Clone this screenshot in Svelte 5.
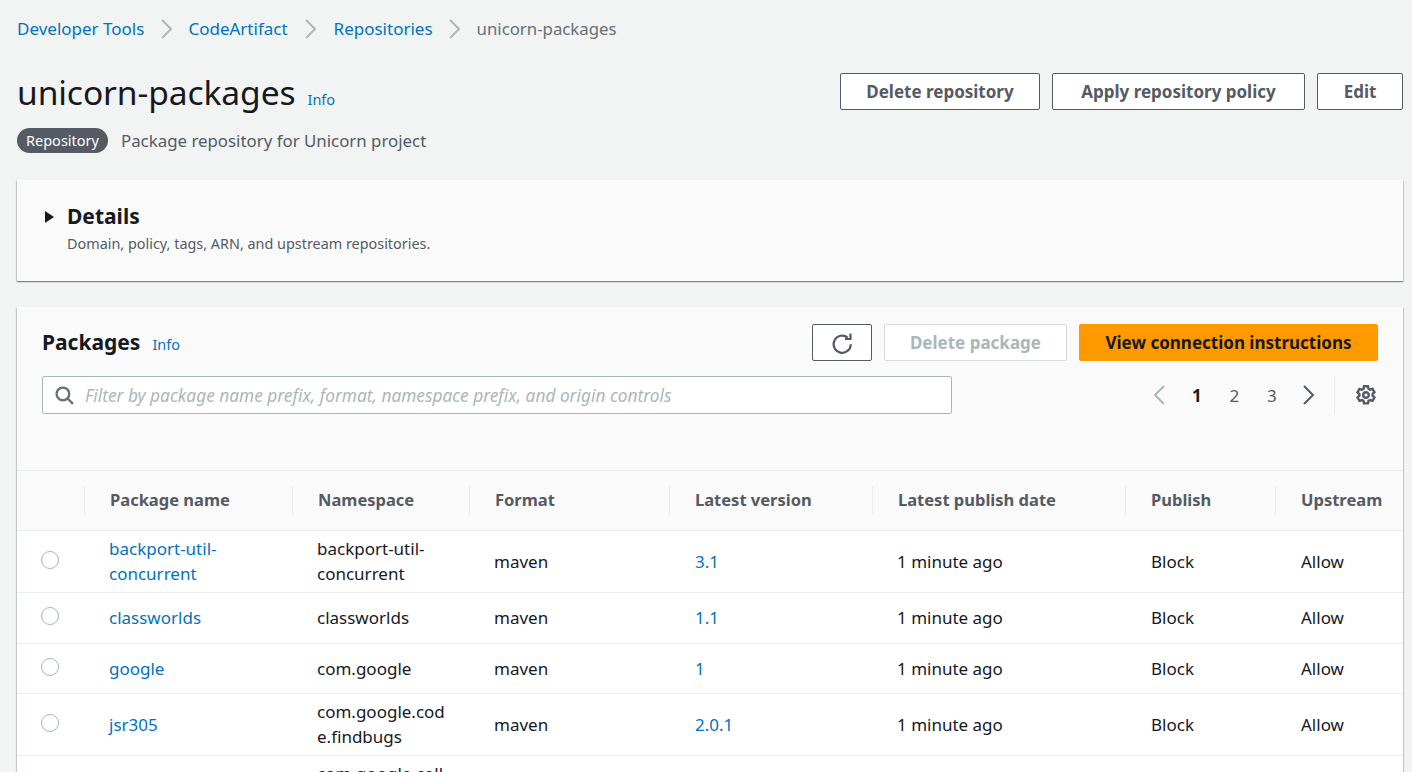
<script>
  const rows = [
    { name: 'backport-util-concurrent', ns: 'backport-util-concurrent', ver: '3.1' },
    { name: 'classworlds', ns: 'classworlds', ver: '1.1' },
    { name: 'google', ns: 'com.google', ver: '1' },
    { name: 'jsr305', ns: 'com.google.code.findbugs', ver: '2.0.1' },
    { name: 'google-collect', ns: 'com.google.collections', ver: '1.0' }
  ];
  const cols = ['Package name', 'Namespace', 'Format', 'Latest version', 'Latest publish date', 'Publish', 'Upstream'];
</script>

<div class="page">
  <nav class="crumbs">
    <a href="#a">Developer Tools</a>
    <svg class="sep" viewBox="0 0 11 20"><path d="M1 1l9 9-9 9" /></svg>
    <a href="#b">CodeArtifact</a>
    <svg class="sep mid" viewBox="0 0 11 20"><path d="M1 1l9 9-9 9" /></svg>
    <a href="#c">Repositories</a>
    <svg class="sep" viewBox="0 0 11 20"><path d="M1 1l9 9-9 9" /></svg>
    <span class="cur">unicorn-packages</span>
  </nav>

  <header class="head">
    <div class="title">
      <h1>unicorn-packages</h1>
      <a class="info" href="#i">Info</a>
    </div>
    <div class="actions">
      <button class="btn">Delete repository</button>
      <button class="btn wide">Apply repository policy</button>
      <button class="btn edit">Edit</button>
    </div>
  </header>

  <div class="sub">
    <span class="badge">Repository</span>
    <span class="desc">Package repository for Unicorn project</span>
  </div>

  <section class="card details">
    <svg class="caret" viewBox="0 0 11 14"><path d="M1 1l9 6-9 6z" /></svg>
    <div>
      <h2>Details</h2>
      <p>Domain, policy, tags, ARN, and upstream repositories.</p>
    </div>
  </section>

  <section class="card packages">
    <div class="tools">
      <div class="tools-top">
        <div class="title2">
          <h2>Packages</h2>
          <a class="info" href="#p">Info</a>
        </div>
        <div class="actions2">
          <button class="btn icon" aria-label="Refresh">
            <svg viewBox="0 0 20 20"><path d="M18.800 11.200a8.600 8.600 0 1 1-3.100-6.600" /><path d="M13 6h5.500V.500" /></svg>
          </button>
          <button class="btn off">Delete package</button>
          <button class="btn primary">View connection instructions</button>
        </div>
      </div>
      <div class="tools-bot">
        <div class="filter">
          <svg viewBox="0 0 18 18"><circle cx="7.500" cy="7.500" r="6" /><path d="m12 12 5 5" /></svg>
          <span>Filter by package name prefix, format, namespace prefix, and origin controls</span>
        </div>
        <div class="pager">
          <span class="cell"><svg class="arrow dim" viewBox="0 0 12 20"><path d="M11 1l-9 9 9 9" /></svg></span>
          <span class="cell on">1</span>
          <span class="cell">2</span>
          <span class="cell">3</span>
          <span class="cell"><svg class="arrow" viewBox="0 0 12 20"><path d="M1 1l9 9-9 9" /></svg></span>
          <span class="vr"></span>
          <svg class="gear" viewBox="0 0 20 20">
            <path d="M8 1.200h4l.5 2.500 1.600.9 2.400-.8 2 3.400-1.900 1.700v1.800l1.900 1.700-2 3.400-2.400-.8-1.600.9-.5 2.500H8l-.5-2.500-1.600-.9-2.400.8-2-3.400 1.900-1.700V9.100L1.500 7.400l2-3.400 2.400.8 1.600-.9z" />
            <circle cx="10" cy="10" r="2.800" />
          </svg>
        </div>
      </div>
    </div>

    <table>
      <colgroup>
        <col class="c0" /><col class="c1" /><col class="c2" /><col class="c3" /><col class="c4" /><col class="c5" /><col class="c6" /><col class="c7" />
      </colgroup>
      <thead>
        <tr>
          <th></th>
          {#each cols as c}
            <th><span class="th">{c}</span></th>
          {/each}
        </tr>
      </thead>
      <tbody>
        {#each rows as r}
          <tr>
            <td class="sel"><span class="radio"></span></td>
            <td><a href="#r">{r.name}</a></td>
            <td class="ns">{r.ns}</td>
            <td>maven</td>
            <td class="nudge"><a href="#v">{r.ver}</a></td>
            <td>1 minute ago</td>
            <td class="nudge">Block</td>
            <td class="nudge">Allow</td>
          </tr>
        {/each}
      </tbody>
    </table>
  </section>
</div>

<style>
  :global(body) {
    margin: 0;
    background: #f2f3f3;
  }
  .page {
    box-sizing: border-box;
    height: 772px;
    overflow: hidden;
    padding: 0 9px 0 17px;
    font-family: "Noto Sans", "Open Sans", sans-serif;
    font-size: 17px;
    color: #16191f;
    background: #f2f3f3;
  }
  a {
    color: #0073bb;
    text-decoration: none;
  }
  button {
    font-family: inherit;
  }
  .crumbs {
    display: flex;
    align-items: center;
    height: 24px;
    padding-top: 17px;
    line-height: 24px;
  }
  .cur {
    color: #687078;
    font-size: 16.800px;
  }
  .sep {
    width: 11px;
    height: 20px;
    margin: 0 16.500px;
    fill: none;
    stroke: #aab7b8;
    stroke-width: 2;
  }
  .sep.mid {
    margin: 0 17.500px;
  }
  .head {
    display: flex;
    justify-content: space-between;
    align-items: flex-start;
    margin-top: 20px;
  }
  .title {
    display: flex;
    align-items: baseline;
    gap: 12px;
    padding-top: 8px;
  }
  h1 {
    margin: 0;
    font-size: 33.600px;
    font-weight: 400;
    line-height: 46px;
    letter-spacing: -0.1px;
  }
  .info {
    font-size: 14.500px;
  }
  .actions,
  .actions2 {
    display: flex;
    gap: 12px;
  }
  .actions {
    gap: 12.500px;
    margin-top: 12px;
  }
  .btn {
    box-sizing: border-box;
    height: 37px;
    padding: 0 25px;
    border: 1px solid #545b64;
    border-radius: 2px;
    background: #fff;
    color: #545b64;
    font-size: 17px;
    font-weight: 700;
    white-space: nowrap;
  }
  .btn.wide {
    padding: 0 28px;
  }
  .btn.edit {
    padding: 0 25.500px;
  }
  .btn.icon {
    display: flex;
    align-items: center;
    justify-content: center;
    width: 60px;
    padding: 0;
  }
  .btn.icon svg {
    width: 20px;
    height: 20px;
    fill: none;
    stroke: #545b64;
    stroke-width: 2.200;
    overflow: visible;
  }
  .btn.off {
    border-color: #d5dbdb;
    color: #aab7b8;
  }
  .btn.primary {
    padding: 0 25.500px;
    border-color: #ff9900;
    background: #ff9900;
    color: #16191f;
  }
  .sub {
    display: flex;
    align-items: center;
    gap: 13px;
    margin-top: 12px;
    height: 26px;
  }
  .badge {
    display: inline-block;
    padding: 0 9px;
    border-radius: 13px;
    background: #545b64;
    color: #fff;
    font-size: 14.500px;
    line-height: 25px;
  }
  .desc {
    color: #545b64;
    font-size: 16.850px;
  }
  .card {
    background: #fafafa;
    box-shadow: 0 1px 1px 0 rgba(0, 28, 36, 0.3), 1px 1px 1px 0 rgba(0, 28, 36, 0.15), -1px 1px 1px 0 rgba(0, 28, 36, 0.15);
  }
  .details {
    box-sizing: border-box;
    display: flex;
    gap: 12px;
    height: 101px;
    margin-top: 27px;
    padding: 22px 27px;
  }
  .caret {
    width: 11px;
    height: 14px;
    margin-top: 8px;
    fill: #16191f;
  }
  h2 {
    margin: 0;
    font-size: 21px;
    font-weight: 700;
    line-height: 28px;
  }
  .details p {
    margin: 4px 0 0;
    font-size: 14.400px;
    line-height: 20px;
    color: #545b64;
  }
  .packages {
    margin-top: 26px;
    height: 600px;
  }
  .tools {
    box-sizing: border-box;
    height: 164px;
    padding: 17px 25px 0;
    border-bottom: 1px solid #eaeded;
  }
  .tools-top,
  .tools-bot {
    display: flex;
    justify-content: space-between;
    align-items: center;
  }
  .title2 {
    display: flex;
    align-items: baseline;
    gap: 12px;
  }
  .title2 h2 {
    line-height: 37px;
  }
  .tools-bot {
    margin-top: 15px;
  }
  .filter {
    box-sizing: border-box;
    display: flex;
    align-items: center;
    gap: 11px;
    width: 910px;
    height: 38px;
    padding: 0 12px;
    border: 1px solid #aab7b8;
    border-radius: 2px;
    background: #fff;
  }
  .filter svg {
    flex: none;
    width: 19px;
    height: 19px;
    fill: none;
    stroke: #687078;
    stroke-width: 2.200;
  }
  .filter span {
    color: #aab7b8;
    font-size: 17.300px;
    font-style: italic;
    white-space: nowrap;
  }
  .pager {
    display: flex;
    align-items: center;
  }
  .cell {
    display: flex;
    align-items: center;
    justify-content: center;
    width: 37.500px;
    color: #545b64;
  }
  .cell.on {
    color: #16191f;
    font-weight: 700;
  }
  .arrow {
    width: 12px;
    height: 20px;
    fill: none;
    stroke: #545b64;
    stroke-width: 2;
  }
  .arrow.dim {
    stroke: #aab7b8;
  }
  .vr {
    width: 1px;
    height: 38px;
    margin: 0 21px 0 6px;
    background: #eaeded;
  }
  .gear {
    width: 20px;
    height: 20px;
    margin-right: 2px;
    fill: none;
    stroke: #545b64;
    stroke-width: 2.400;
  }
  table {
    width: 100%;
    border-collapse: collapse;
    table-layout: fixed;
  }
  .c0 { width: 67px; }
  .c1 { width: 208px; }
  .c2 { width: 177px; }
  .c3 { width: 200px; }
  .c4 { width: 203px; }
  .c5 { width: 253px; }
  .c6 { width: 150px; }
  th {
    box-sizing: border-box;
    height: 59px;
    padding: 0;
    border-bottom: 1px solid #eaeded;
    text-align: left;
    font-size: 16.500px;
    font-weight: 700;
    color: #545b64;
  }
  .th {
    display: flex;
    align-items: center;
    box-sizing: border-box;
    height: 29px;
    padding: 0 0 1px 25px;
    border-left: 1px solid #eaeded;
    white-space: nowrap;
  }
  tbody {
    background: #fff;
  }
  td {
    box-sizing: border-box;
    height: 50px;
    padding: 5.500px 20px 5.500px 25px;
    border-bottom: 1px solid #eaeded;
    line-height: 25px;
    overflow-wrap: break-word;
  }
  tbody tr:nth-child(2) td {
    height: 51px;
  }
  td:first-child {
    padding: 0;
  }
  td.nudge {
    padding-left: 26px;
  }
  .ns {
    word-break: break-word;
  }
  td.sel {
    vertical-align: middle;
  }
  .radio {
    display: block;
    box-sizing: border-box;
    width: 18px;
    height: 18px;
    margin: -3px 0 0 24px;
    border: 1.500px solid #aab7b8;
    border-radius: 50%;
    background: #fff;
  }
</style>
